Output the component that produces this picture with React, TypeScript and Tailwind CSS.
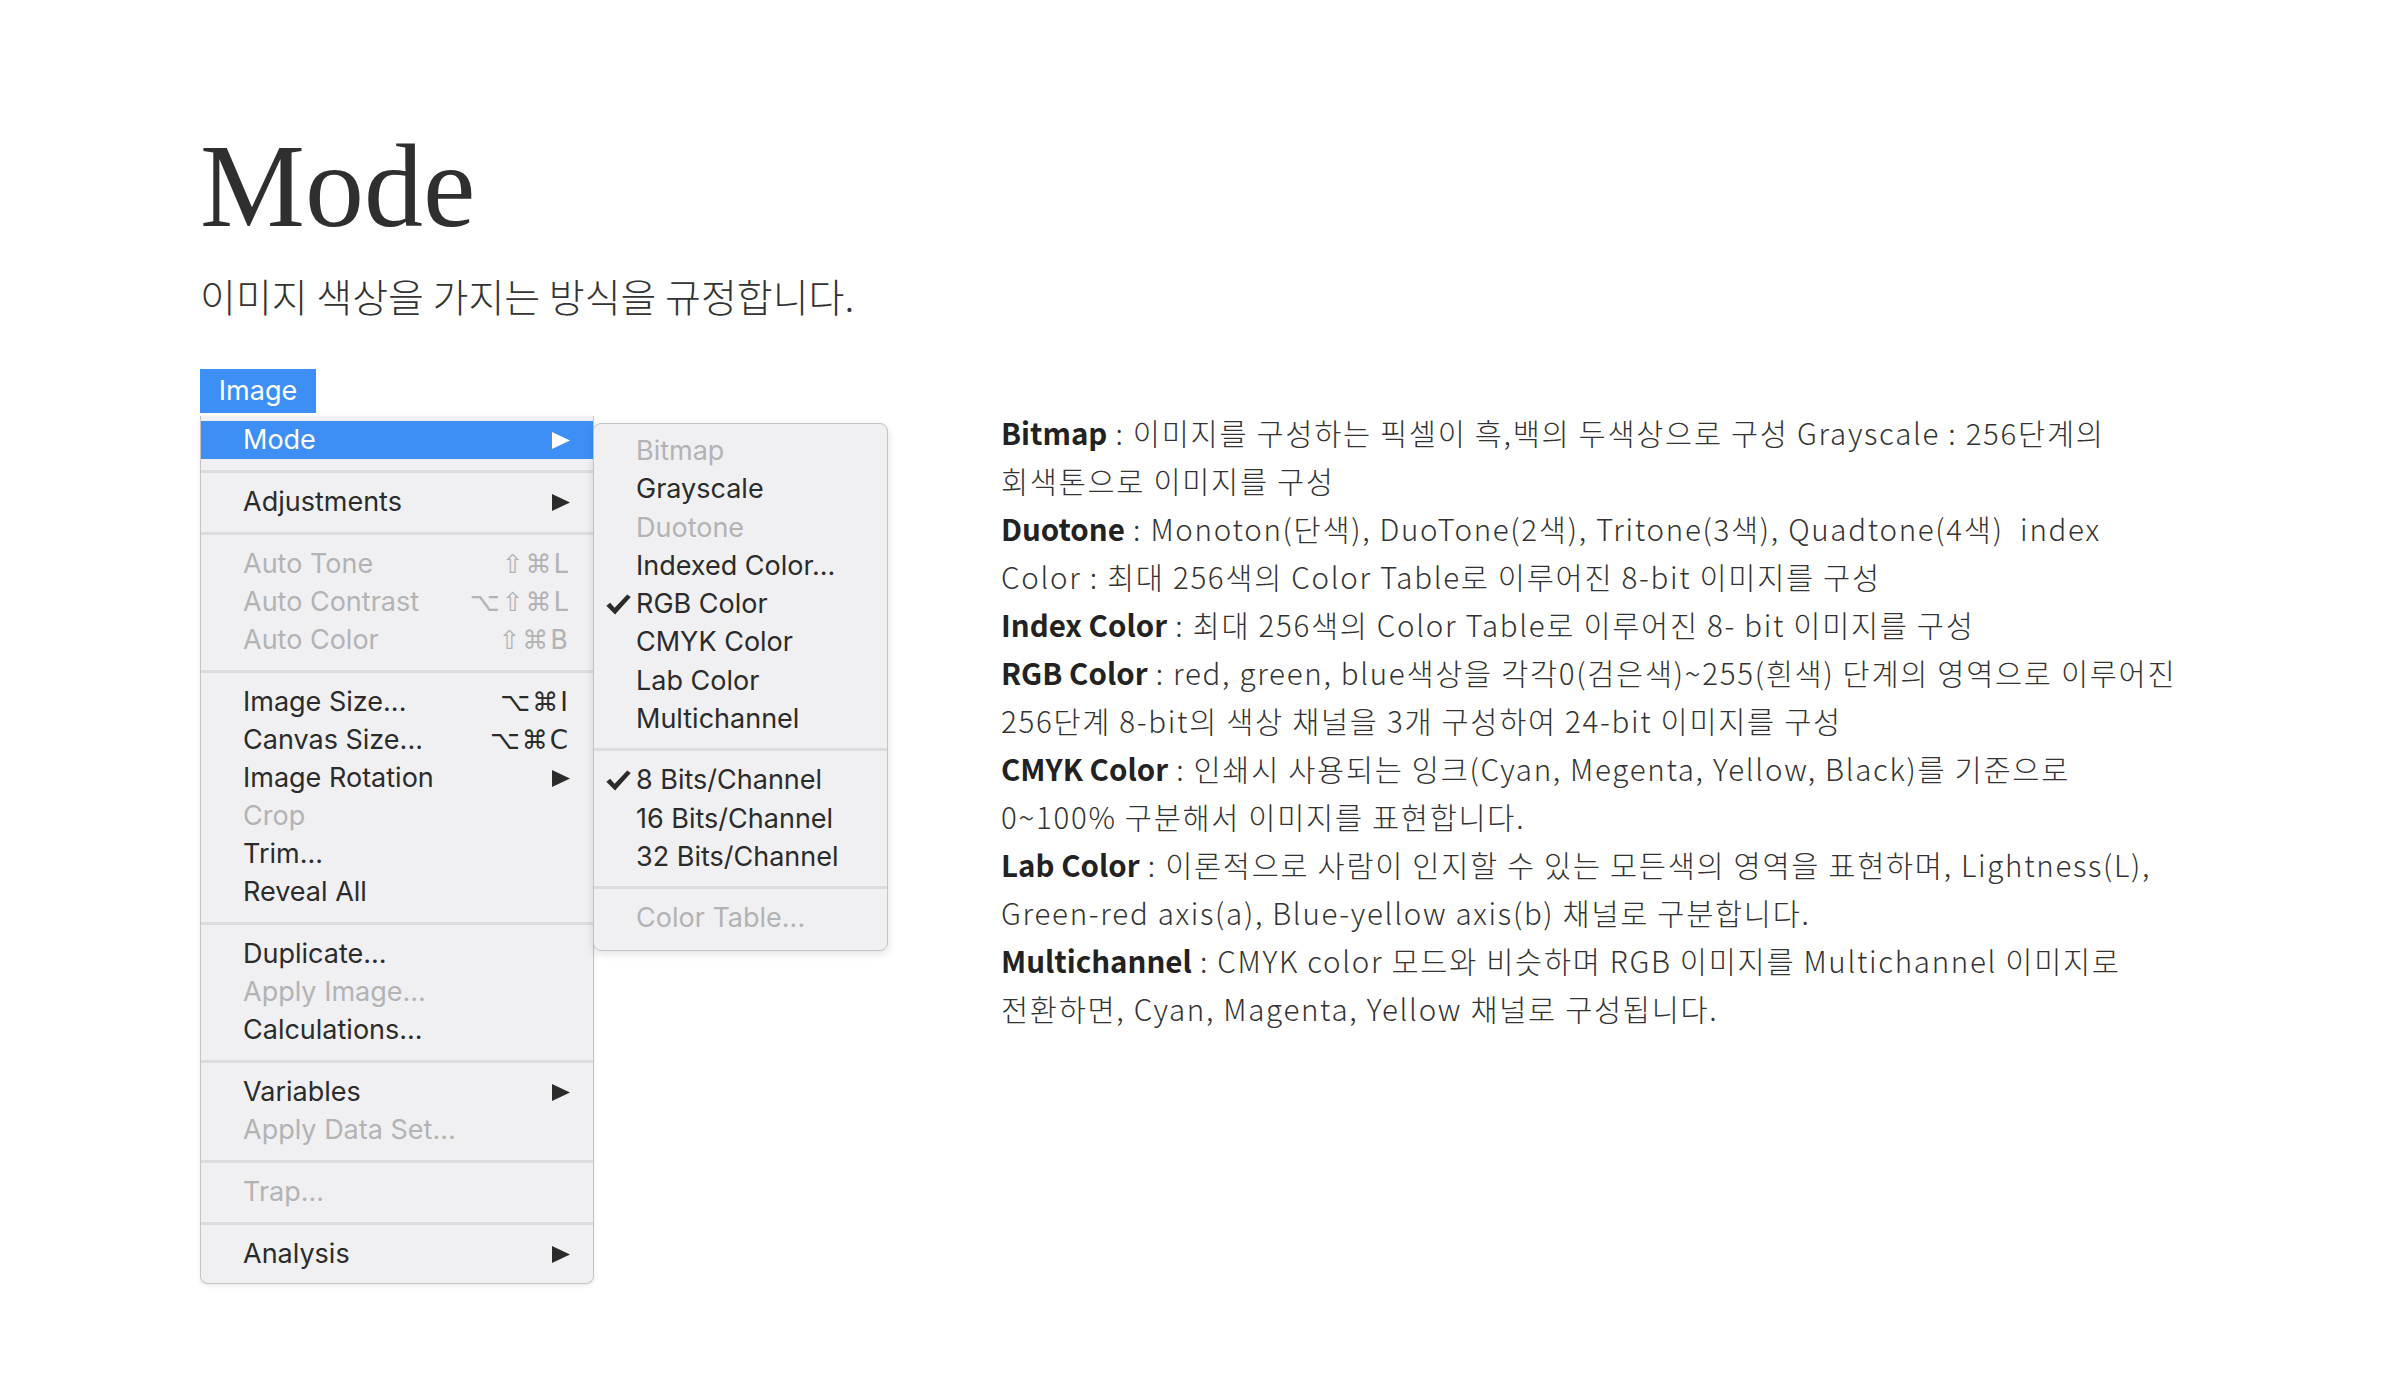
import React from "react";

type Item =
  | { type: "sep" }
  | {
      type?: "item";
      label: string;
      shortcut?: string;
      arrow?: boolean;
      disabled?: boolean;
      active?: boolean;
      checked?: boolean;
    };

const mainMenu: Item[] = [
  { label: "Mode", arrow: true, active: true },
  { type: "sep" },
  { label: "Adjustments", arrow: true },
  { type: "sep" },
  { label: "Auto Tone", shortcut: "⇧⌘L", disabled: true },
  { label: "Auto Contrast", shortcut: "⌥⇧⌘L", disabled: true },
  { label: "Auto Color", shortcut: "⇧⌘B", disabled: true },
  { type: "sep" },
  { label: "Image Size...", shortcut: "⌥⌘I" },
  { label: "Canvas Size...", shortcut: "⌥⌘C" },
  { label: "Image Rotation", arrow: true },
  { label: "Crop", disabled: true },
  { label: "Trim..." },
  { label: "Reveal All" },
  { type: "sep" },
  { label: "Duplicate..." },
  { label: "Apply Image...", disabled: true },
  { label: "Calculations..." },
  { type: "sep" },
  { label: "Variables", arrow: true },
  { label: "Apply Data Set...", disabled: true },
  { type: "sep" },
  { label: "Trap...", disabled: true },
  { type: "sep" },
  { label: "Analysis", arrow: true },
];

const subMenu: Item[] = [
  { label: "Bitmap", disabled: true },
  { label: "Grayscale" },
  { label: "Duotone", disabled: true },
  { label: "Indexed Color..." },
  { label: "RGB Color", checked: true },
  { label: "CMYK Color" },
  { label: "Lab Color" },
  { label: "Multichannel" },
  { type: "sep" },
  { label: "8 Bits/Channel", checked: true },
  { label: "16 Bits/Channel" },
  { label: "32 Bits/Channel" },
  { type: "sep" },
  { label: "Color Table...", disabled: true },
];

// 오른쪽 설명 (원본 줄바꿈 그대로)
const lines: { bold?: string; text: string }[] = [
  { bold: "Bitmap", text: " : 이미지를 구성하는 픽셀이 흑,백의 두색상으로 구성 Grayscale : 256단계의" },
  { text: "회색톤으로 이미지를 구성" },
  { bold: "Duotone", text: " : Monoton(단색), DuoTone(2색), Tritone(3색), Quadtone(4색)  index" },
  { text: "Color : 최대 256색의 Color Table로 이루어진 8-bit 이미지를 구성" },
  { bold: "Index Color", text: " : 최대 256색의 Color Table로 이루어진 8- bit 이미지를 구성" },
  { bold: "RGB Color", text: " : red, green, blue색상을 각각0(검은색)~255(흰색) 단계의 영역으로 이루어진" },
  { text: "256단계 8-bit의 색상 채널을 3개 구성하여 24-bit 이미지를 구성" },
  { bold: "CMYK Color", text: " : 인쇄시 사용되는 잉크(Cyan, Megenta, Yellow, Black)를 기준으로" },
  { text: "0~100% 구분해서 이미지를 표현합니다." },
  { bold: "Lab Color", text: " : 이론적으로 사람이 인지할 수 있는 모든색의 영역을 표현하며, Lightness(L)," },
  { text: "Green-red axis(a), Blue-yellow axis(b) 채널로 구분합니다." },
  { bold: "Multichannel", text: " : CMYK color 모드와 비슷하며 RGB 이미지를 Multichannel 이미지로" },
  { text: "전환하면, Cyan, Magenta, Yellow 채널로 구성됩니다." },
];

function Arrow({ white }: { white?: boolean }) {
  return (
    <svg width="18" height="17" viewBox="0 0 18 17">
      <polygon points="0,0 18,8.5 0,17" fill={white ? "#ffffff" : "#2b2b2b"} />
    </svg>
  );
}

function Check() {
  return (
    <svg width="25" height="21" viewBox="0 0 24 20">
      <path d="M0.3 11.2 L4 8.4 L8.3 13.2 L20.4 0.4 L23.8 2.8 L8.7 19.6 Z" fill="#2b2b2b" />
    </svg>
  );
}

function Separator({ h }: { h: string }) {
  return (
    <div className={`flex items-center ${h}`}>
      <div className="h-[3px] w-full bg-[#dcdcde]" />
    </div>
  );
}

export default function App() {
  return (
    <div className="min-h-[1400px] w-[2400px] bg-white pl-[200px] text-[#2e2e2e]">
      <h1 className="pt-[128px] font-['Liberation_Serif',serif] text-[118px] leading-none text-[#2f2f2f]">
        Mode
      </h1>
      <p className="mt-[30px] font-['Noto_Sans_CJK_KR',sans-serif] text-[39px] font-light leading-none text-[#333]">
        이미지 색상을 가지는 방식을 규정합니다.
      </p>

      <div className="mt-[54px] flex">
        {/* 메뉴 */}
        <div className="w-[394px] font-['Inter','DejaVu_Sans',sans-serif] text-[27px]">
          <div className="flex h-[44px] w-[116px] items-center justify-center bg-[#3d8ef5] text-white">
            Image
          </div>
          <div className="relative mt-[3px]">
            <div className="rounded-b-[8px] border-x border-b border-[#c4c4c6] bg-[#f0f0f2] pb-[10px] pt-[5px] shadow-[0_2px_4px_rgba(0,0,0,0.08)]">
              {mainMenu.map((it, i) =>
                it.type === "sep" ? (
                  <Separator key={i} h="h-[24px]" />
                ) : (
                  <div
                    key={i}
                    className={`flex h-[38px] items-center justify-between pl-[42px] pr-[23px] ${
                      it.active ? "bg-[#3d8ef5] text-white" : it.disabled ? "text-[#b3b3b5]" : "text-[#2b2b2b]"
                    }`}
                  >
                    <span>{it.label}</span>
                    {it.arrow && <Arrow white={it.active} />}
                    {it.shortcut && (
                      <span className="font-['DejaVu_Sans','Inter',sans-serif] text-[26px] tracking-[2px]">
                        {it.shortcut}
                      </span>
                    )}
                  </div>
                )
              )}
            </div>

            {/* 하위 메뉴 */}
            <div className="absolute left-[393px] top-[7px] w-[295px] rounded-[8px] border border-[#c4c4c6] bg-[#f0f0f2] pb-[12px] pt-[8px] shadow-[0_3px_8px_rgba(0,0,0,0.12)]">
              {subMenu.map((it, i) =>
                it.type === "sep" ? (
                  <Separator key={i} h="h-[23px]" />
                ) : (
                  <div
                    key={i}
                    className={`flex h-[38.3px] items-center pl-[12px] ${
                      it.disabled ? "text-[#b3b3b5]" : "text-[#2b2b2b]"
                    }`}
                  >
                    <span className="flex w-[30px] items-center">{it.checked && <Check />}</span>
                    <span>{it.label}</span>
                  </div>
                )
              )}
            </div>
          </div>
        </div>

        {/* 설명 */}
        <div className="ml-[407px] mt-[39px] font-['Noto_Sans_CJK_KR',sans-serif] text-[29.5px] font-light leading-[48px] tracking-[1.7px] text-[#333]">
          {lines.map((l, i) => (
            <div key={i} className="whitespace-pre">
              {l.bold && <span className="font-bold tracking-[0px] text-[#222]">{l.bold}</span>}
              {l.text}
            </div>
          ))}
        </div>
      </div>
    </div>
  );
}
